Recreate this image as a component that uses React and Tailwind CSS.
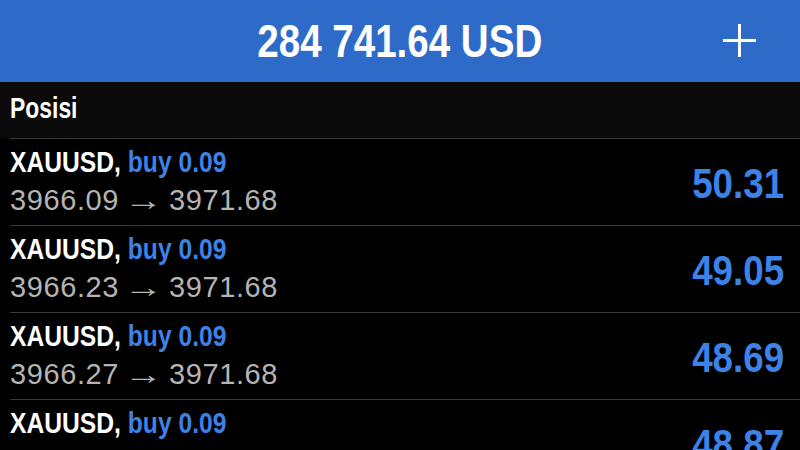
import React from "react";

const rows = [
  { open: "3966.09", close: "3971.68", profit: "50.31" },
  { open: "3966.23", close: "3971.68", profit: "49.05" },
  { open: "3966.27", close: "3971.68", profit: "48.69" },
  { open: "3966.27", close: "3971.68", profit: "48.87" },
];

const sans = { fontFamily: '"Liberation Sans", Arial, sans-serif' };

export default function App() {
  return (
    <div className="w-[800px] h-[450px] overflow-hidden bg-black" style={sans}>
      <div className="relative h-[82px] bg-[#2e6bc9] flex items-center justify-center">
        <span className="inline-block whitespace-nowrap origin-center scale-x-[0.82] text-white font-bold text-[47px] leading-[82px] ml-[-1px]">
          284 741.64 USD
        </span>
        <svg className="absolute left-[722px] top-[23px]" width="35" height="35" viewBox="0 0 35 35">
          <path d="M17.5 1V34M1 17.5H34" stroke="#ffffff" strokeWidth="3" fill="none" />
        </svg>
      </div>
      <div className="h-[56px] bg-[#0a0a0a] pt-[9px] pl-[10px]">
        <span className="inline-block whitespace-nowrap origin-left scale-x-[0.79] text-white font-bold text-[29px] leading-[34px]">
          Posisi
        </span>
      </div>
      {rows.map((r, i) => (
        <div key={i} className="h-[87px] flex">
          <div className="flex-1 ml-[10px] border-t border-[#3a3a3a] flex items-center justify-between pr-[16px]">
            <div className="flex flex-col h-full pt-[6px]">
              <span className="inline-block whitespace-nowrap origin-left scale-x-[0.85] text-[29px] leading-[34px] font-bold">
                <span className="text-white">XAUUSD,</span>{" "}
                <span className="text-[#3d82e6]">buy 0.09</span>
              </span>
              <div className="mt-[4px] flex items-baseline whitespace-nowrap text-[29px] leading-[34px] tracking-[0.6px] text-[#b4b4b4]">
                <span>{r.open}</span>
                <span className="inline-flex justify-center w-[28px] ml-[11px] mr-[11px]">
                  <span className="inline-block scale-x-[1.35]">→</span>
                </span>
                <span>{r.close}</span>
              </div>
            </div>
            <span className="inline-block whitespace-nowrap origin-right scale-x-[0.875] mt-[3px] text-[42px] leading-none font-bold text-[#3d82e6]">
              {r.profit}
            </span>
          </div>
        </div>
      ))}
    </div>
  );
}
